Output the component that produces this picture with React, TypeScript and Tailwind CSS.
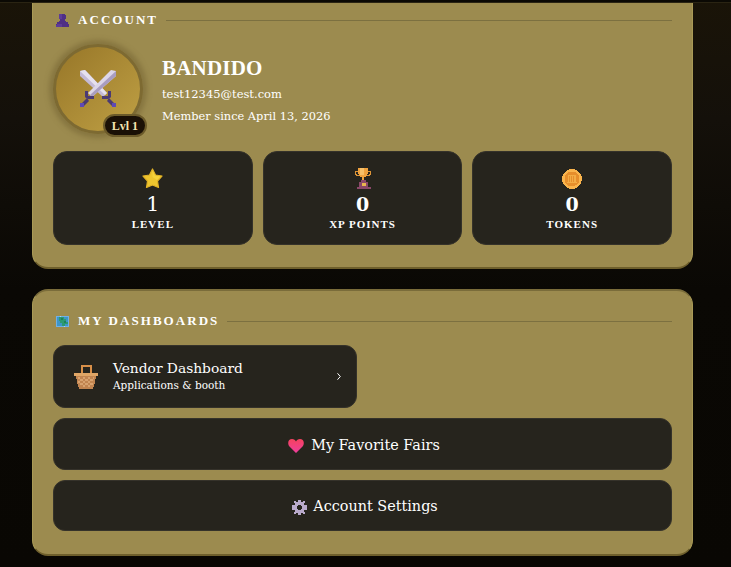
import React from "react";

const serif = "font-['DejaVu_Serif',serif]";
const head = "font-['Liberation_Serif',serif]";

function Person() {
  return (
    <svg width="13" height="13" viewBox="0 0 13 13" shapeRendering="crispEdges" className="shrink-0">
      <path d="M3 0h6v1h1v4H9v2h1v1h2v2h1v3H0v-3h1V8h2V7h1V5H3z" fill="#4f2f86" />
      <path d="M3 0h3v5H4v0H3zM1 10h5v3H0v-2h1z" fill="#5d3a98" />
    </svg>
  );
}

function MapIcon() {
  return (
    <svg width="13" height="11" viewBox="0 0 13 11" shapeRendering="crispEdges" className="shrink-0">
      <rect width="13" height="11" fill="#6fb1e8" />
      <rect x="1" y="1" width="11" height="9" fill="#3d95c9" />
      <path d="M3 1h5v2h2v3h2v2H9v2H6V7H4V5H3z" fill="#2c9a72" />
      <path d="M5 2h2v2H5zM8 5h2v2H8z" fill="#1f7f5e" />
      <rect x="4" y="0" width="1" height="1" fill="#a9d2f2" />
      <rect x="8" y="10" width="1" height="1" fill="#a9d2f2" />
    </svg>
  );
}

function Swords() {
  return (
    <svg width="38" height="38" viewBox="0 0 38 38">
      <path d="M1 1 L6 0 L28 23 L24 27 L1 6 Z" fill="#c4bad6" />
      <path d="M1 1 L6 0 L28 23 L26 25 Z" fill="#e6e1ef" />
      <path d="M37 1 L32 0 L9 23 L13 27 L37 6 Z" fill="#dcd6e8" />
      <path d="M37 1 L37 6 L13 27 L11 25 Z" fill="#a99dc0" />
      <path d="M6 21 h3 v5 h6 v3 h-6 l-2 -1 l-1 -1z" fill="#4b3a73" />
      <path d="M32 21 h-3 v5 h-6 v3 h6 l2 -1 l1 -1z" fill="#4b3a73" />
      <path d="M8 28 L2 34 L1 37 L5 36 L10 31 Z" fill="#4b3a73" />
      <path d="M1 33 h4 v4 h-4z" fill="#5f49b5" />
      <path d="M30 28 L36 34 L37 37 L33 36 L28 31 Z" fill="#4b3a73" />
      <path d="M33 33 h4 v4 h-4z" fill="#5f49b5" />
    </svg>
  );
}

function Star() {
  return (
    <svg width="21" height="21" viewBox="0 0 21 21">
      <path d="M10.500 1 L13.500 7 L20 8 L15.500 13 L16.500 19.500 L10.500 17 L4.500 19.500 L5.500 13 L1 8 L7.500 7 Z" fill="#eec52e" stroke="#e2b326" strokeWidth="1.200" strokeLinejoin="round" />
      <path d="M10.500 2 L13 7.500 L18.500 8.500 L15 12 L10.500 9 Z" fill="#f6d23a" />
    </svg>
  );
}

function Trophy() {
  return (
    <svg width="18" height="21" viewBox="0 0 18 21" shapeRendering="crispEdges">
      <path d="M1 3h3v1H2v2h1v1h2v1H2V7H1zM17 3h-3v1h2v2h-1v1h-2v1h3V7h1z" fill="#dd9437" />
      <path d="M4 0h10v6h-1v2h-1v1h-2v3H8V9H6V8H5V6H4z" fill="#f0a23e" />
      <path d="M6 0h4v7H6z" fill="#f7c068" />
      <path d="M5 14h9v6H5z" fill="#8a4869" />
      <path d="M7 12h5v2H7zM3 19h14v2H3z" fill="#8a4869" />
      <path d="M8 15h4v3H8z" fill="#e9b74e" />
    </svg>
  );
}

function Coin() {
  return (
    <svg width="20" height="20" viewBox="0 0 20 20" shapeRendering="crispEdges">
      <circle cx="10" cy="10" r="10" fill="#f9b44c" />
      <circle cx="10" cy="10" r="7.500" fill="#e68e2b" />
      <path d="M6 6h8v1H6zM6 7h1v6H6zM8 7h1v6H8zM10 7h1v6h-1zM12 7h2v6h-2z" fill="#f3ac44" />
      <path d="M5 13h10v1H5z" fill="#f3ac44" />
    </svg>
  );
}

function Basket() {
  return (
    <svg width="24" height="24" viewBox="0 0 24 24" shapeRendering="crispEdges">
      <path d="M7 0h11v8h-2V2H9v6H7z" fill="#d88f48" />
      <path d="M0 8h24v3H0z" fill="#e0a666" />
      <path d="M2 11h20v3h-1v5h-1v3h-1v2H5v-2H4v-3H3v-5H2z" fill="#c28550" />
      <path d="M4 12h2v2H4zM9 12h2v2H9zM14 12h2v2h-2zM19 12h1v2h-1zM6 14h3v2H6zM11 14h3v2h-3zM16 14h3v2h-3zM4 16h2v2H4zM9 16h2v2H9zM14 16h2v2h-2zM6 18h3v2H6zM11 18h3v2h-3zM16 18h3v2h-3zM9 20h2v2H9zM14 20h2v2h-2z" fill="#d9a36f" />
    </svg>
  );
}

function Heart() {
  return (
    <svg width="16" height="14" viewBox="0 0 16 14">
      <defs>
        <linearGradient id="h" x1="0" y1="0" x2="0" y2="1">
          <stop offset="0" stopColor="#f5425e" />
          <stop offset="1" stopColor="#ee3e9c" />
        </linearGradient>
      </defs>
      <path d="M8 14 L1 7 C-1 3 1 0 4 0 C6 0 7.300 1 8 2.500 C8.700 1 10 0 12 0 C15 0 17 3 15 7 Z" fill="url(#h)" />
    </svg>
  );
}

function Gear() {
  return (
    <svg width="15" height="15" viewBox="0 0 15 15" shapeRendering="crispEdges">
      <path d="M6 0h3v2h2V1h2v2h-1v2h3v5h-3v2h1v2h-2v-1H9v2H6v-2H4v1H2v-2h1v-2H0V5h3V3H2V1h2v1h2z" fill="#b9aacb" />
      <path d="M6 5h3v5H6z M5 6h5v3H5z" fill="#25231c" />
    </svg>
  );
}

function Chevron() {
  return (
    <svg width="4" height="7" viewBox="0 0 4 7" fill="none" stroke="#ffffff" strokeWidth="1">
      <path d="M0.500 0.300 L3.300 3.500 L0.500 6.700" />
    </svg>
  );
}

function SectionTitle({ icon, label }: { icon: React.ReactNode; label: string }) {
  return (
    <div className="flex items-center h-[14px]">
      <div className="w-[25px] pl-[3px] flex items-center">{icon}</div>
      <span className={`${head} text-[13px] font-bold tracking-[2.050px] text-white whitespace-nowrap`}>{label}</span>
      <div className="flex-1 h-px ml-[8px] bg-[#7c7040]" />
    </div>
  );
}

function Stat({ icon, value, label, bold }: { icon: React.ReactNode; value: string; label: string; bold?: boolean }) {
  return (
    <div className="flex-1 h-[94px] rounded-[14px] bg-[#26241d] border border-[#35322a] flex flex-col items-center pt-[16px]">
      <div className="h-[21px] flex items-center justify-center">{icon}</div>
      <div className={`${serif} leading-[26px] mt-[2px] text-white ${bold ? "font-bold text-[19px]" : "text-[20px]"}`}>{value}</div>
      <div className={`${head} text-[11px] leading-[13px] font-bold tracking-[1px] text-white mt-[1px]`}>{label}</div>
    </div>
  );
}

function WideButton({ children, h, gap, left }: { children: React.ReactNode; h: string; gap: string; left: string }) {
  return (
    <div className={`${h} ${gap} ${left} rounded-[12px] bg-[#26241d] border border-[#35322a] flex items-center justify-center pt-[3px] ${serif} text-[14.400px] text-white`}>
      {children}
    </div>
  );
}

export default function App() {
  return (
    <div className="w-[731px] h-[567px] overflow-hidden flex flex-col bg-[linear-gradient(180deg,#1a1408_0px,#14100a_120px,#0a0804_290px,#090703_567px)]">
      <div className="h-[2px] shrink-0 bg-[#0b0904]" />
      <div className="h-px shrink-0 bg-[#2a2413]" />
      <div className="ml-[32px] w-[661px] shrink-0 h-[266px] rounded-b-[16px] bg-[#9c8b4f] border-x border-b-2 border-x-[#a99a56] border-b-[#6e5f2c] px-[20px] pt-[10px]">
        <SectionTitle icon={<Person />} label="ACCOUNT" />
        <div className="flex items-center mt-[17px] h-[90px]">
          <div className="relative w-[90px] h-[90px] shrink-0 rounded-full border-[3px] border-[#7d6a32] bg-[linear-gradient(135deg,#977628,#bfa044)] shadow-[0_0_5px_4px_rgba(120,104,54,0.6)] flex items-center justify-center">
            <Swords />
            <div className={`absolute right-[-7px] bottom-[-6px] h-[23px] px-[7px] rounded-full bg-[#1a1006] border-2 border-[#6b5a2a] flex items-center ${head} text-[12px] font-bold small-caps text-[#f5e3b0] whitespace-nowrap`}>
              Lvl 1
            </div>
          </div>
          <div className="ml-[19px] flex flex-col text-white">
            <div className={`${head} text-[21px] leading-[26px] font-bold tracking-[0.200px] mt-[1px]`}>BANDIDO</div>
            <div className={`${serif} text-[11.500px] leading-[16px] mt-[5px]`}>test12345@test.com</div>
            <div className={`${serif} text-[11.400px] leading-[16px] mt-[6px]`}>Member since April 13, 2026</div>
          </div>
        </div>
        <div className="flex gap-[10px] mt-[17px]">
          <Stat icon={<Star />} value="1" label="LEVEL" />
          <Stat icon={<Trophy />} value="0" label="XP POINTS" bold />
          <Stat icon={<Coin />} value="0" label="TOKENS" bold />
        </div>
      </div>
      <div className="ml-[32px] w-[661px] mt-[20px] shrink-0 h-[267px] rounded-[16px] bg-[#9c8b4f] border-x border-t-2 border-b-2 border-x-[#a99a56] border-t-[#7a6c3a] border-b-[#6e5f2c] px-[20px] pt-[23px]">
        <SectionTitle icon={<MapIcon />} label="MY DASHBOARDS" />
        <div className="mt-[17px] w-[304px] h-[63px] rounded-[12px] bg-[#26241d] border border-[#35322a] flex items-center pl-[20px] pr-[15px]">
          <Basket />
          <div className="ml-[15px] flex-1 text-white">
            <div className={`${serif} text-[13.800px] leading-[18px] -mt-[1px]`}>Vendor Dashboard</div>
            <div className={`${serif} text-[10.500px] leading-[15px] mt-[1px]`}>Applications &amp; booth</div>
          </div>
          <Chevron />
        </div>
        <div className="mt-[10px] flex flex-col gap-[10px]">
          <WideButton h="h-[52px]" gap="gap-[7px]" left="pl-[3px]"><Heart />My Favorite Fairs</WideButton>
          <WideButton h="h-[51px]" gap="gap-[6px]" left="pl-[5px]"><Gear />Account Settings</WideButton>
        </div>
      </div>
    </div>
  );
}
